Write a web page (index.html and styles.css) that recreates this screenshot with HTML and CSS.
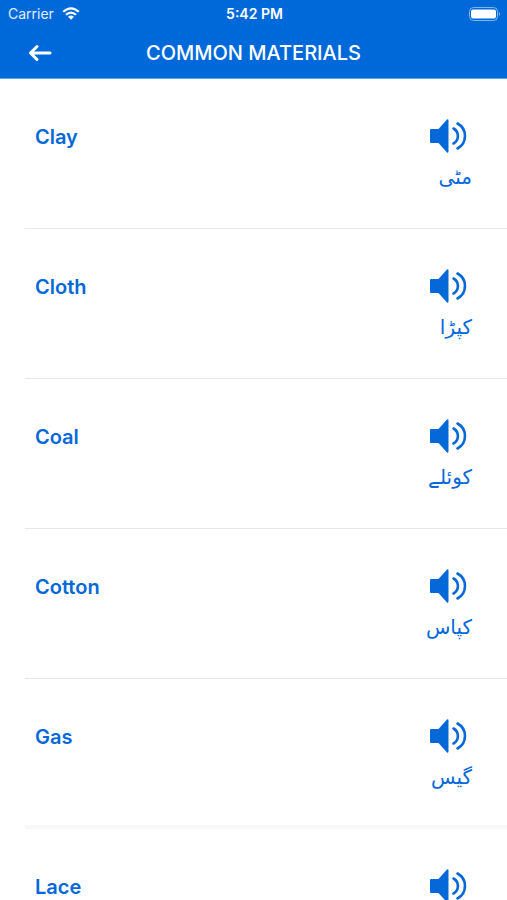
FILE: index.html
```html
<!DOCTYPE html>
<html lang="en">
<head>
<meta charset="utf-8">
<meta name="viewport" content="width=device-width, initial-scale=1">
<title>Common Materials</title>
<link rel="stylesheet" href="styles.css">
</head>
<body>
<svg class="defs" aria-hidden="true">
  <symbol id="speaker" viewBox="0 0 38 34">
    <path d="M1 10H8.500L17 .6Q18.500-.2 18.500 1.500V32.500Q18.500 34.200 17 33.400L8.500 24H1Q0 24 0 23V11Q0 10 1 10Z" fill="currentColor"/>
    <path d="M23.500 9.500A8.600 8.600 0 0 1 23.500 24.500M27.500 4.500A14.200 14.200 0 0 1 27.500 29.500" fill="none" stroke="currentColor" stroke-width="2.600" stroke-linecap="round"/>
  </symbol>
</svg>
<div class="app">
  <header class="top">
    <div class="status">
      <span class="carrier">Carrier
        <svg class="wifi" viewBox="0 0 18 13" aria-hidden="true">
          <path d="M1.200 4.800Q9-2.200 16.800 4.800M4 7.800Q9 3.300 14 7.800" fill="none" stroke="currentColor" stroke-width="2.200"/>
          <path d="M6 9.800Q9 7.400 12 9.800L9 12.800Z" fill="currentColor"/>
        </svg>
      </span>
      <span class="time">5:42 PM</span>
      <svg class="battery" viewBox="0 0 32 14" aria-hidden="true">
        <rect x=".5" y=".5" width="28" height="13" rx="4" fill="none" stroke="#7db5f0"/>
        <rect x="2" y="2.500" width="25" height="9" rx="2" fill="#fff"/>
        <path d="M30 5Q32 7 30 9Z" fill="#7db5f0"/>
      </svg>
    </div>
    <div class="bar">
      <button class="back" type="button" aria-label="Back">
        <svg viewBox="0 0 24 18" aria-hidden="true"><path d="M22 9H3M9 2.500L2.500 9L9 15.500" fill="none" stroke="currentColor" stroke-width="3" stroke-linecap="round" stroke-linejoin="round"/></svg>
      </button>
      <h1>COMMON MATERIALS</h1>
    </div>
  </header>
  <ul class="list">
    <li class="row"><span class="word">Clay</span><div class="side"><button class="play" type="button" aria-label="Play Clay"><svg><use href="#speaker"/></svg></button><span class="urdu" lang="ur" dir="rtl">مٹی</span></div></li>
    <li class="row"><span class="word">Cloth</span><div class="side"><button class="play" type="button" aria-label="Play Cloth"><svg><use href="#speaker"/></svg></button><span class="urdu" lang="ur" dir="rtl">کپڑا</span></div></li>
    <li class="row"><span class="word">Coal</span><div class="side"><button class="play" type="button" aria-label="Play Coal"><svg><use href="#speaker"/></svg></button><span class="urdu" lang="ur" dir="rtl">کوئلے</span></div></li>
    <li class="row"><span class="word">Cotton</span><div class="side"><button class="play" type="button" aria-label="Play Cotton"><svg><use href="#speaker"/></svg></button><span class="urdu" lang="ur" dir="rtl">کپاس</span></div></li>
    <li class="row row-end"><span class="word">Gas</span><div class="side"><button class="play" type="button" aria-label="Play Gas"><svg><use href="#speaker"/></svg></button><span class="urdu" lang="ur" dir="rtl">گیس</span></div></li>
    <li class="row"><span class="word">Lace</span><div class="side"><button class="play" type="button" aria-label="Play Lace"><svg><use href="#speaker"/></svg></button></div></li>
  </ul>
</div>
</body>
</html>
```
FILE: styles.css
```css
* { box-sizing: border-box; }
body {
  margin: 0;
  background: #fff;
  color: #0568d9;
  font-family: Inter, "Liberation Sans", sans-serif;
}
.defs { position: absolute; width: 0; height: 0; }
.app { display: flex; flex-direction: column; height: 100vh; }
.top {
  flex: none;
  background: #0069da;
  border-bottom: 1px solid #55a5ee;
  color: #fff;
}
.status {
  display: grid;
  grid-template-columns: 1fr auto 1fr;
  align-items: center;
  height: 27px;
  padding: 0 6px 0 8px;
  font-size: 14px;
  line-height: 27px;
}
.carrier { display: flex; align-items: center; gap: 8px; color: #e0eefc; }
.wifi { width: 18px; height: 13px; color: #fff; }
.time { font-weight: 600; }
.battery { justify-self: end; width: 32px; height: 14px; }
.bar {
  display: grid;
  grid-template-columns: 80px 1fr 80px;
  align-items: center;
  height: 51px;
}
.back {
  display: flex;
  align-items: center;
  justify-content: center;
  height: 48px;
  padding: 0;
  border: 0;
  background: none;
  color: inherit;
}
.back svg { width: 24px; height: 18px; }
h1 {
  margin: 0;
  font-size: 20px;
  font-weight: 500;
  line-height: 24px;
  text-align: center;
  white-space: nowrap;
}
.list {
  flex: 1;
  min-height: 0;
  margin: 0;
  padding: 0 0 0 25px;
  overflow-y: auto;
  scrollbar-width: none;
  list-style: none;
}
.row {
  display: flex;
  justify-content: space-between;
  height: 150px;
  padding: 40px 35px 0 10px;
  border-bottom: 1px solid #e8e8e8;
}
.row-end { border-bottom: 4px solid #f8f8f8; }
.word { font-size: 20px; font-weight: 600; line-height: 36px; }
.side { display: flex; flex-direction: column; align-items: flex-end; }
.play {
  display: block;
  height: 34px;
  margin-right: 4px;
  padding: 0;
  border: 0;
  background: none;
  color: inherit;
}
.play svg { display: block; width: 38px; height: 34px; }
.urdu {
  margin-top: 8px;
  font-family: "DejaVu Sans", sans-serif;
  font-size: 20px;
  line-height: 32px;
}
```
